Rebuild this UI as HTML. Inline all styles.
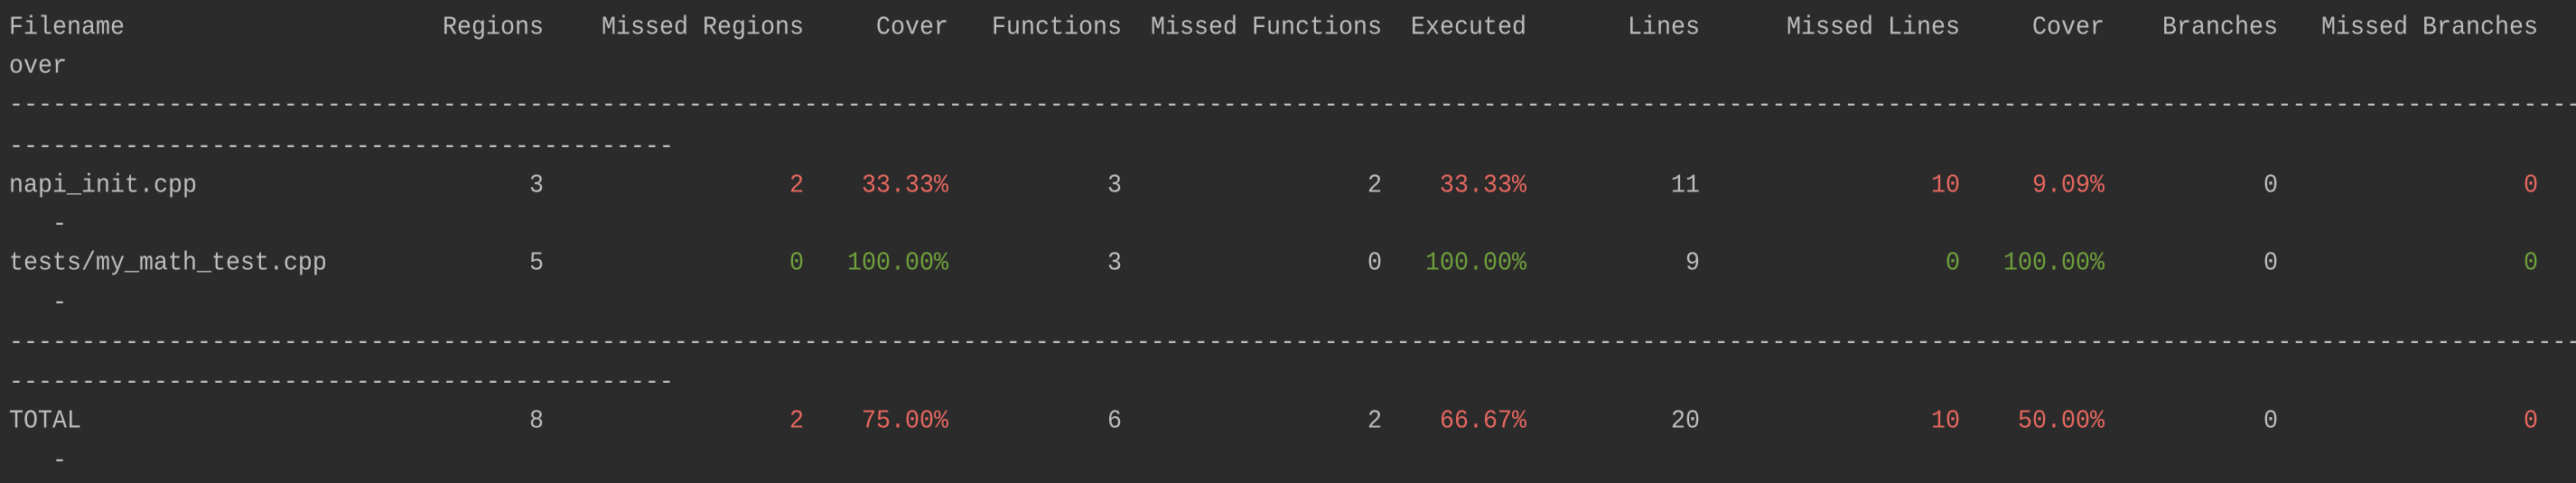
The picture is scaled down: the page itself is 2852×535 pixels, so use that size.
<!DOCTYPE html>
<html><head><meta charset="utf-8"><style>
html,body{margin:0;padding:0;background:#2b2b2b;width:2852px;height:518px;overflow:hidden}
.r{position:absolute;left:0;width:2852px;height:44px;line-height:44px;font-family:"Liberation Mono",monospace;font-size:26.67px;color:#bcbcbc;white-space:pre}
.c{position:absolute;top:0;text-align:right;transform:scaleY(1.08)}
.l{position:absolute;left:10px;top:0;transform:scaleY(1.08)}
.red{color:#e5675f}.grn{color:#6f9f3c}
</style></head><body>
<div class="r" style="top:9px"><span class="l">Filename</span><span class="c" style="right:2250px">Regions</span><span class="c" style="right:1962px">Missed Regions</span><span class="c" style="right:1802px">Cover</span><span class="c" style="right:1610px">Functions</span><span class="c" style="right:1322px">Missed Functions</span><span class="c" style="right:1162px">Executed</span><span class="c" style="right:970px">Lines</span><span class="c" style="right:682px">Missed Lines</span><span class="c" style="right:522px">Cover</span><span class="c" style="right:330px">Branches</span><span class="c" style="right:42px">Missed Branches</span></div>
<div class="r" style="top:52px"><span class="l">over</span></div>
<div class="r" style="top:95px"><span class="l">----------------------------------------------------------------------------------------------------------------------------------------------------------------------------------</span></div>
<div class="r" style="top:141px"><span class="l">----------------------------------------------</span></div>
<div class="r" style="top:184px"><span class="l">napi_init.cpp</span><span class="c" style="right:2250px">3</span><span class="c red" style="right:1962px">2</span><span class="c red" style="right:1802px">33.33%</span><span class="c" style="right:1610px">3</span><span class="c" style="right:1322px">2</span><span class="c red" style="right:1162px">33.33%</span><span class="c" style="right:970px">11</span><span class="c red" style="right:682px">10</span><span class="c red" style="right:522px">9.09%</span><span class="c" style="right:330px">0</span><span class="c red" style="right:42px">0</span></div>
<div class="r" style="top:227px"><span class="l">   -</span></div>
<div class="r" style="top:270px"><span class="l">tests/my_math_test.cpp</span><span class="c" style="right:2250px">5</span><span class="c grn" style="right:1962px">0</span><span class="c grn" style="right:1802px">100.00%</span><span class="c" style="right:1610px">3</span><span class="c" style="right:1322px">0</span><span class="c grn" style="right:1162px">100.00%</span><span class="c" style="right:970px">9</span><span class="c grn" style="right:682px">0</span><span class="c grn" style="right:522px">100.00%</span><span class="c" style="right:330px">0</span><span class="c grn" style="right:42px">0</span></div>
<div class="r" style="top:314px"><span class="l">   -</span></div>
<div class="r" style="top:358px"><span class="l">----------------------------------------------------------------------------------------------------------------------------------------------------------------------------------</span></div>
<div class="r" style="top:402px"><span class="l">----------------------------------------------</span></div>
<div class="r" style="top:445px"><span class="l">TOTAL</span><span class="c" style="right:2250px">8</span><span class="c red" style="right:1962px">2</span><span class="c red" style="right:1802px">75.00%</span><span class="c" style="right:1610px">6</span><span class="c" style="right:1322px">2</span><span class="c red" style="right:1162px">66.67%</span><span class="c" style="right:970px">20</span><span class="c red" style="right:682px">10</span><span class="c red" style="right:522px">50.00%</span><span class="c" style="right:330px">0</span><span class="c red" style="right:42px">0</span></div>
<div class="r" style="top:489px"><span class="l">   -</span></div>
</body></html>
